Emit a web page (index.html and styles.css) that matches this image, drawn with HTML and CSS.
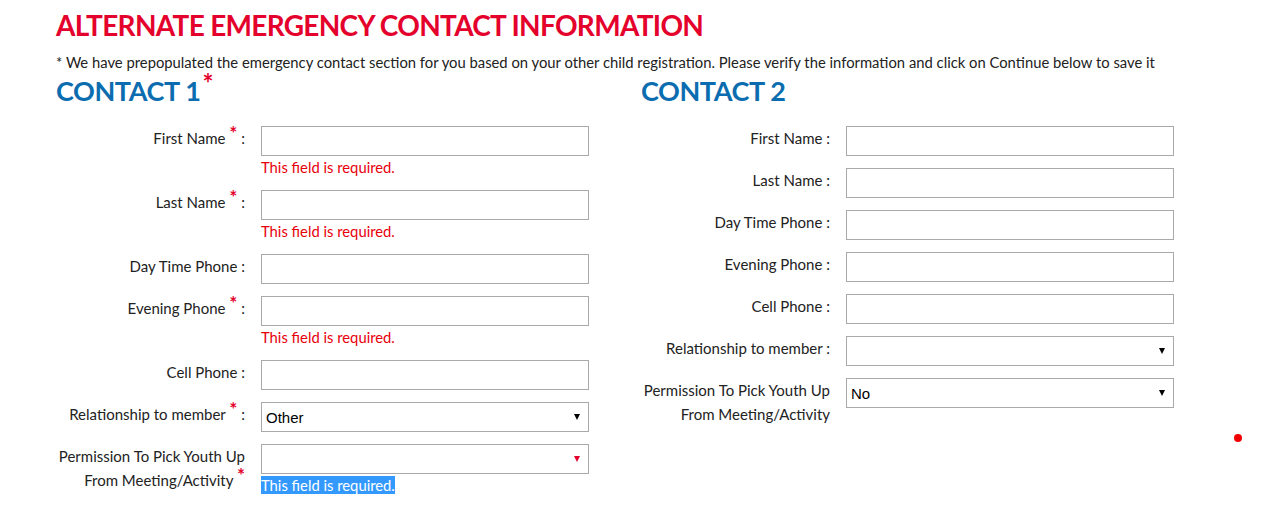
FILE: index.html
```html
<!DOCTYPE html>
<html lang="en">
<head>
<meta charset="utf-8">
<title>Alternate Emergency Contact Information</title>
<link rel="stylesheet" href="styles.css">
</head>
<body>
<div class="page">
  <h1 class="title">ALTERNATE EMERGENCY CONTACT INFORMATION</h1>
  <p class="note">* We have prepopulated the emergency contact section for you based on your other child registration. Please verify the information and click on Continue below to save it</p>
  <div class="columns">
    <section class="contact">
      <h2 class="contact-title">CONTACT 1<span class="req-big">*</span></h2>
      <div class="row">
        <label class="label">First Name <span class="req">*</span> :</label>
        <div class="field"><input class="input" type="text"><div class="error">This field is required.</div></div>
      </div>
      <div class="row">
        <label class="label">Last Name <span class="req">*</span> :</label>
        <div class="field"><input class="input" type="text"><div class="error">This field is required.</div></div>
      </div>
      <div class="row">
        <label class="label">Day Time Phone :</label>
        <div class="field"><input class="input" type="text"></div>
      </div>
      <div class="row">
        <label class="label">Evening Phone <span class="req">*</span> :</label>
        <div class="field"><input class="input" type="text"><div class="error">This field is required.</div></div>
      </div>
      <div class="row">
        <label class="label">Cell Phone :</label>
        <div class="field"><input class="input" type="text"></div>
      </div>
      <div class="row">
        <label class="label">Relationship to member <span class="req">*</span> :</label>
        <div class="field"><div class="select"><span class="select-value">Other</span><span class="arrow"></span></div></div>
      </div>
      <div class="row">
        <label class="label">Permission To Pick Youth Up From Meeting/Activity <span class="req">*</span></label>
        <div class="field"><div class="select"><span class="select-value"></span><span class="arrow arrow-red"></span></div><div class="error"><span class="selected">This field is required.</span></div></div>
      </div>
    </section>
    <section class="contact">
      <h2 class="contact-title">CONTACT 2</h2>
      <div class="row">
        <label class="label">First Name :</label>
        <div class="field"><input class="input" type="text"></div>
      </div>
      <div class="row">
        <label class="label">Last Name :</label>
        <div class="field"><input class="input" type="text"></div>
      </div>
      <div class="row">
        <label class="label">Day Time Phone :</label>
        <div class="field"><input class="input" type="text"></div>
      </div>
      <div class="row">
        <label class="label">Evening Phone :</label>
        <div class="field"><input class="input" type="text"></div>
      </div>
      <div class="row">
        <label class="label">Cell Phone :</label>
        <div class="field"><input class="input" type="text"></div>
      </div>
      <div class="row">
        <label class="label">Relationship to member :</label>
        <div class="field"><div class="select"><span class="select-value"></span><span class="arrow"></span></div></div>
      </div>
      <div class="row">
        <label class="label">Permission To Pick Youth Up From Meeting/Activity</label>
        <div class="field"><div class="select"><span class="select-value">No</span><span class="arrow"></span></div></div>
      </div>
    </section>
  </div>
  <span class="dot"></span>
</div>
</body>
</html>
```

FILE: styles.css
```css
html, body {
  margin: 0;
  padding: 0;
  background: #ffffff;
}
body {
  font-family: Lato, "Open Sans", "Liberation Sans", sans-serif;
  color: #222222;
}
.page {
  position: relative;
  width: 1267px;
  height: 505px;
  padding: 0 56px;
  box-sizing: border-box;
  overflow: hidden;
}
.title {
  margin: 0;
  padding-top: 7px;
  font-size: 28px;
  line-height: 36px;
  font-weight: 700;
  color: #e4022d;
  letter-spacing: -0.7px;
}
.note {
  margin: 9px 0 0 0;
  font-size: 14.8px;
  line-height: 20px;
  color: #222222;
}
.columns {
  display: flex;
}
.contact {
  width: 585px;
  flex: none;
}
.contact-title {
  margin: 0;
  padding-top: 3px;
  font-size: 27px;
  line-height: 32px;
  font-weight: 700;
  color: #0b6db0;
  letter-spacing: -0.4px;
  height: 32px;
  margin-bottom: 19px;
}
.req-big {
  color: #e4022d;
  font-size: 26px;
  vertical-align: 8px;
  line-height: 0;
  margin-left: 2px;
}
.row {
  display: grid;
  grid-template-columns: 189px 328px;
  column-gap: 16px;
  margin-bottom: 12px;
}
.label {
  text-align: right;
  font-size: 15px;
  line-height: 24px;
  color: #222222;
}
.req {
  color: #e4022d;
  font-size: 19px;
  font-weight: 700;
  vertical-align: 4px;
  line-height: 0;
}
.field {
  display: flex;
  flex-direction: column;
}
.input {
  display: block;
  width: 328px;
  height: 30px;
  box-sizing: border-box;
  border: 1px solid #a9a9a9;
  margin: 0;
  padding: 0 4px;
  background: #ffffff;
  font-family: "Liberation Sans", Arial, sans-serif;
  font-size: 15px;
}
.select {
  position: relative;
  width: 328px;
  height: 30px;
  box-sizing: border-box;
  border: 1px solid #a9a9a9;
  background: #ffffff;
  display: flex;
  align-items: center;
  padding-left: 4px;
}
.select-value {
  font-family: "Liberation Sans", Arial, sans-serif;
  font-size: 15px;
  color: #000000;
}
.arrow {
  position: absolute;
  right: 8px;
  top: 11px;
  width: 0;
  height: 0;
  border-left: 3.5px solid transparent;
  border-right: 3.5px solid transparent;
  border-top: 6px solid #000000;
}
.arrow-red {
  border-top-color: #e4022d;
}
.error {
  font-size: 14.8px;
  line-height: 22px;
  color: #e8000b;
}
.selected {
  background: #3399ff;
  color: #ffffff;
}
.dot {
  position: absolute;
  left: 1234px;
  top: 434px;
  width: 8px;
  height: 8px;
  border-radius: 50%;
  background: #f00000;
}
```
